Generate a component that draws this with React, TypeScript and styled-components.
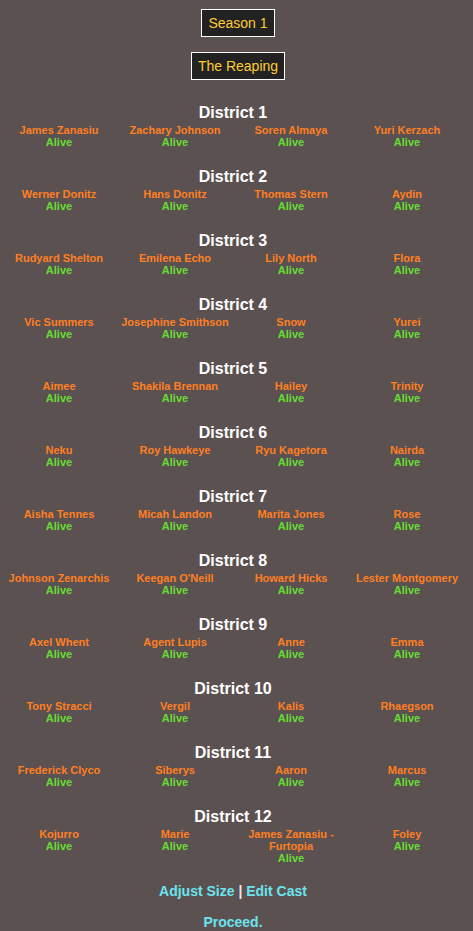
import React from "react";
import styled, { createGlobalStyle } from "styled-components";

const Global = createGlobalStyle`
  html, body {
    margin: 0;
    padding: 0;
    background: #5c5151;
  }
  body {
    font-family: "Liberation Sans", Arial, sans-serif;
  }
`;

const Page = styled.div`
  width: 466px;
  padding-top: 9px;
  padding-bottom: 4px;
  display: flex;
  flex-direction: column;
  align-items: center;
`;

const Header = styled.div`
  display: flex;
  flex-direction: column;
  align-items: center;
  gap: 15px;
  padding-left: 10px;
  margin-bottom: 24px;
`;

const TagBox = styled.div`
  box-sizing: border-box;
  height: 28px;
  padding: 4px 6px;
  border: 1px solid #ffffff;
  background: #222222;
  color: #ffcc33;
  font-size: 14px;
  line-height: 18px;
`;

const Districts = styled.div`
  display: flex;
  flex-direction: column;
  gap: 20px;
`;

const District = styled.section`
  display: flex;
  flex-direction: column;
  align-items: center;
  gap: 2px;
`;

const DistrictTitle = styled.h2`
  margin: 0;
  color: #ffffff;
  font-size: 16px;
  line-height: 18px;
  font-weight: bold;
`;

const Tributes = styled.div`
  display: grid;
  grid-template-columns: repeat(4, 116px);
`;

const Tribute = styled.div`
  display: flex;
  flex-direction: column;
  align-items: center;
  text-align: center;
  font-size: 11px;
  line-height: 12px;
  font-weight: bold;
`;

const Name = styled.span`
  color: #ff7f22;
`;

const Status = styled.span`
  color: #66dd33;
`;

const Links = styled.div`
  margin-top: 19px;
  font-size: 14px;
  line-height: 16px;
  font-weight: bold;
  color: #6ae4ee;
`;

const Sep = styled.span`
  color: #e8e8e8;
`;

const Proceed = styled.div`
  margin-top: 15px;
  font-size: 14px;
  line-height: 16px;
  font-weight: bold;
  color: #6ae4ee;
`;

const districts: string[][] = [
  ["James Zanasiu", "Zachary Johnson", "Soren Almaya", "Yuri Kerzach"],
  ["Werner Donitz", "Hans Donitz", "Thomas Stern", "Aydin"],
  ["Rudyard Shelton", "Emilena Echo", "Lily North", "Flora"],
  ["Vic Summers", "Josephine Smithson", "Snow", "Yurei"],
  ["Aimee", "Shakila Brennan", "Hailey", "Trinity"],
  ["Neku", "Roy Hawkeye", "Ryu Kagetora", "Nairda"],
  ["Aisha Tennes", "Micah Landon", "Marita Jones", "Rose"],
  ["Johnson Zenarchis", "Keegan O'Neill", "Howard Hicks", "Lester Montgomery"],
  ["Axel Whent", "Agent Lupis", "Anne", "Emma"],
  ["Tony Stracci", "Vergil", "Kalis", "Rhaegson"],
  ["Frederick Clyco", "Siberys", "Aaron", "Marcus"],
  ["Kojurro", "Marie", "James Zanasiu - Furtopia", "Foley"],
];

export default function App() {
  return (
    <>
      <Global />
      <Page>
        <Header>
          <TagBox>Season 1</TagBox>
          <TagBox>The Reaping</TagBox>
        </Header>
        <Districts>
          {districts.map((names, i) => (
            <District key={i}>
              <DistrictTitle>District {i + 1}</DistrictTitle>
              <Tributes>
                {names.map((n) => (
                  <Tribute key={n}>
                    <Name>{n}</Name>
                    <Status>Alive</Status>
                  </Tribute>
                ))}
              </Tributes>
            </District>
          ))}
        </Districts>
        <Links>
          Adjust Size <Sep>|</Sep> Edit Cast
        </Links>
        <Proceed>Proceed.</Proceed>
      </Page>
    </>
  );
}
